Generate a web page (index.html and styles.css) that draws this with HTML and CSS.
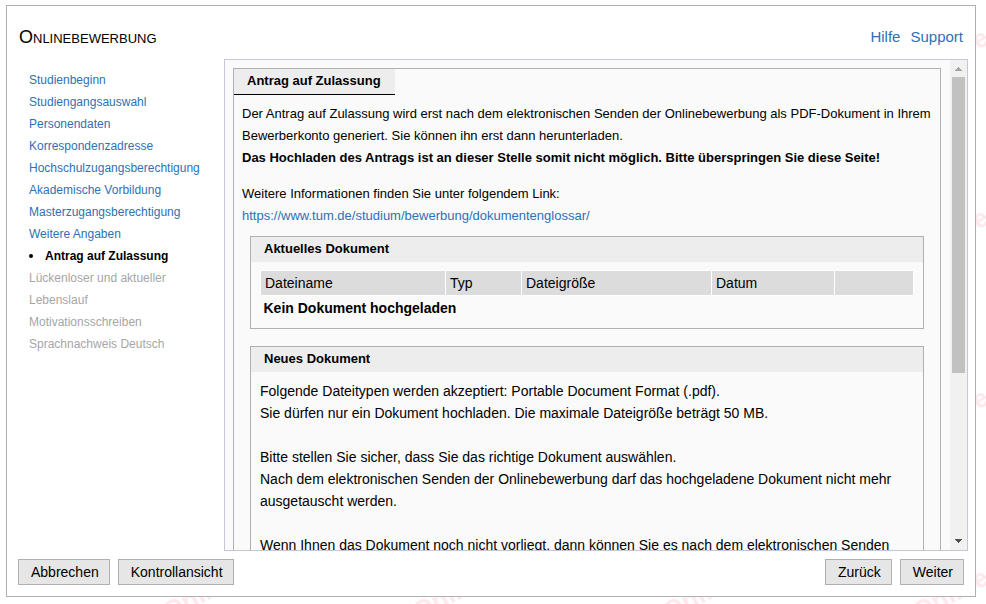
FILE: index.html
```html
<!DOCTYPE html>
<html lang="de">
<head>
  <meta charset="UTF-8">
  <meta name="viewport" content="width=device-width, initial-scale=1.0">
  <title>Onlinebewerbung</title>
  <link rel="stylesheet" href="styles.css">
</head>
<body>
  <svg class="watermark" aria-hidden="true">
    <defs>
      <pattern id="mark" width="250" height="180" patternUnits="userSpaceOnUse" x="160" y="440">
        <text x="9" y="181" transform="rotate(-28 9 181)">Online</text>
        <text x="9" y="1" transform="rotate(-28 9 1)">Online</text>
      </pattern>
    </defs>
    <rect width="100%" height="100%" fill="url(#mark)"></rect>
  </svg>

  <div class="dialog">
    <header class="header">
      <h1>Onlinebewerbung</h1>
      <nav class="help">
        <a href="#">Hilfe</a>
        <a href="#">Support</a>
      </nav>
    </header>

    <div class="content">
      <nav class="steps">
        <ul>
          <li><a href="#">Studienbeginn</a></li>
          <li><a href="#">Studiengangsauswahl</a></li>
          <li><a href="#">Personendaten</a></li>
          <li><a href="#">Korrespondenzadresse</a></li>
          <li><a href="#">Hochschulzugangsberechtigung</a></li>
          <li><a href="#">Akademische Vorbildung</a></li>
          <li><a href="#">Masterzugangsberechtigung</a></li>
          <li><a href="#">Weitere Angaben</a></li>
          <li class="active">Antrag auf Zulassung</li>
          <li class="disabled">Lückenloser und aktueller<br>Lebenslauf</li>
          <li class="disabled">Motivationsschreiben</li>
          <li class="disabled">Sprachnachweis Deutsch</li>
        </ul>
      </nav>

      <div class="panel">
        <main class="scroll-area">
          <section class="page">
            <h2 class="tab">Antrag auf Zulassung</h2>
            <p>Der Antrag auf Zulassung wird erst nach dem elektronischen Senden der Onlinebewerbung als PDF-Dokument in Ihrem Bewerberkonto generiert. Sie können ihn erst dann herunterladen.<br>
              <strong>Das Hochladen des Antrags ist an dieser Stelle somit nicht möglich. Bitte überspringen Sie diese Seite!</strong></p>
            <p>Weitere Informationen finden Sie unter folgendem Link:<br>
              <a href="#">https://www.tum.de/studium/bewerbung/dokumentenglossar/</a></p>

            <section class="box">
              <h3>Aktuelles Dokument</h3>
              <div class="box-body">
                <table>
                  <colgroup>
                    <col>
                    <col class="col-type">
                    <col class="col-size">
                    <col class="col-date">
                    <col class="col-action">
                  </colgroup>
                  <thead>
                    <tr>
                      <th>Dateiname</th>
                      <th>Typ</th>
                      <th>Dateigröße</th>
                      <th>Datum</th>
                      <th></th>
                    </tr>
                  </thead>
                  <tbody>
                    <tr>
                      <td colspan="5">Kein Dokument hochgeladen</td>
                    </tr>
                  </tbody>
                </table>
              </div>
            </section>

            <section class="box">
              <h3>Neues Dokument</h3>
              <div class="box-body">
                <p>Folgende Dateitypen werden akzeptiert: Portable Document Format (.pdf).<br>
                  Sie dürfen nur ein Dokument hochladen. Die maximale Dateigröße beträgt 50 MB.</p>
                <p>Bitte stellen Sie sicher, dass Sie das richtige Dokument auswählen.<br>
                  Nach dem elektronischen Senden der Onlinebewerbung darf das hochgeladene Dokument nicht mehr ausgetauscht werden.</p>
                <p>Wenn Ihnen das Dokument noch nicht vorliegt, dann können Sie es nach dem elektronischen Senden</p>
              </div>
            </section>
          </section>
        </main>

        <div class="scrollbar">
          <svg class="arrow up" viewBox="0 0 17 17"><path d="M5 11h7v-1h-1v-1h-1v-1h-1v-1h-1v1h-1v1h-1v1h-1z"></path></svg>
          <div class="track"><div class="thumb"></div></div>
          <svg class="arrow down" viewBox="0 0 17 17"><path d="M5 6h7v1h-1v1h-1v1h-1v1h-1v-1h-1v-1h-1v-1h-1z"></path></svg>
        </div>
      </div>
    </div>

    <footer class="footer">
      <button type="button">Abbrechen</button>
      <button type="button">Kontrollansicht</button>
      <button type="button" class="back">Zurück</button>
      <button type="button">Weiter</button>
    </footer>
  </div>
</body>
</html>
```

FILE: styles.css
```css
* {
  box-sizing: border-box;
}

body {
  margin: 0;
  padding: 5px 10px 7px 6px;
  height: 100vh;
  font-family: "Liberation Sans", Arial, sans-serif;
  font-size: 13px;
  line-height: 22px;
  color: #000;
  background-color: #fff;
}

a {
  color: #3070b3;
  text-decoration: none;
}

h1,
h2,
h3,
p,
ul {
  margin: 0;
  padding: 0;
}

/* Repeating watermark behind the dialog */
.watermark {
  position: absolute;
  top: 0;
  left: 0;
  width: 100%;
  height: 100%;
  z-index: -1;
}

.watermark text {
  font-size: 26px;
  font-weight: bold;
  fill: #ffe9ee;
}

.dialog {
  display: flex;
  flex-direction: column;
  height: 100%;
  padding: 0 7px 11px 11px;
  border: 1px solid #b0b0b0;
  background-color: #fff;
}

.header {
  display: flex;
  justify-content: space-between;
  align-items: center;
  height: 53px;
  padding: 8px 5px 0 1px;
}

.header h1 {
  font-size: 18px;
  font-weight: normal;
  font-variant: small-caps;
}

.help {
  display: flex;
  gap: 10px;
  font-size: 15px;
}

.content {
  display: flex;
  flex: 1;
  min-height: 0;
}

.steps {
  width: 206px;
  padding: 10px 0 0 11px;
  font-size: 12px;
}

.steps ul {
  list-style: none;
}

.steps .active {
  display: flex;
  align-items: center;
  gap: 12px;
  font-weight: bold;
}

.steps .active::before {
  content: "";
  width: 4px;
  height: 4px;
  border-radius: 50%;
  background-color: #000;
}

.steps .disabled {
  color: #a6a6a6;
}

.panel {
  display: flex;
  flex: 1;
  min-width: 0;
  border: 1px solid #c5c5dc;
  background-color: #fafafa;
}

.scroll-area {
  flex: 1;
  overflow: hidden;
  padding: 8px 9px 8px 8px;
}

.page {
  border: 1px solid #b0b0b0;
  padding-bottom: 16px;
}

.tab {
  display: inline-block;
  height: 26px;
  padding: 1px 14px 0 13px;
  border-bottom: 1px solid #000;
  background-color: #ededed;
  font-size: 13px;
  vertical-align: top;
}

.page > p {
  padding: 0 8px;
  margin-bottom: 14px;
}

.page > .tab + p {
  margin-top: 8px;
}

.page > p + .box {
  margin-top: -5px;
}

.box {
  margin: 0 16px 17px;
  border: 1px solid #b0b0b0;
}

.box h3 {
  height: 25px;
  padding: 1px 0 0 13px;
  background-color: #ededed;
  font-size: 13px;
}

.box-body {
  padding: 8px 9px;
  font-size: 14px;
}

.box-body p {
  margin-bottom: 22px;
}

table {
  width: 100%;
  table-layout: fixed;
  border-collapse: collapse;
}

th {
  height: 25px;
  padding: 0 4px;
  border: 1px solid #fff;
  background-color: #dcdcdc;
  font-weight: normal;
  text-align: left;
}

td {
  padding: 1px 3px;
  font-weight: bold;
}

.col-type {
  width: 76px;
}

.col-size {
  width: 190px;
}

.col-date {
  width: 123px;
}

.col-action {
  width: 79px;
}

.scrollbar {
  display: flex;
  flex-direction: column;
  width: 17px;
  background-color: #f1f1f1;
}

.arrow {
  width: 17px;
  height: 17px;
  fill: #505050;
}

.arrow.up {
  fill: #a3a3a3;
}

.track {
  flex: 1;
  padding: 0 2px;
}

.thumb {
  height: 65%;
  background-color: #c1c1c1;
}

.footer {
  display: flex;
  gap: 8px;
  padding: 8px 4px 0 0;
}

.footer button {
  height: 26px;
  padding: 0 10px 0 12px;
  border: 1px solid #b0b0b0;
  background-color: #e6e6e6;
  color: #000;
  font-family: inherit;
  font-size: 14px;
}

.footer .back {
  margin-left: auto;
}
```
